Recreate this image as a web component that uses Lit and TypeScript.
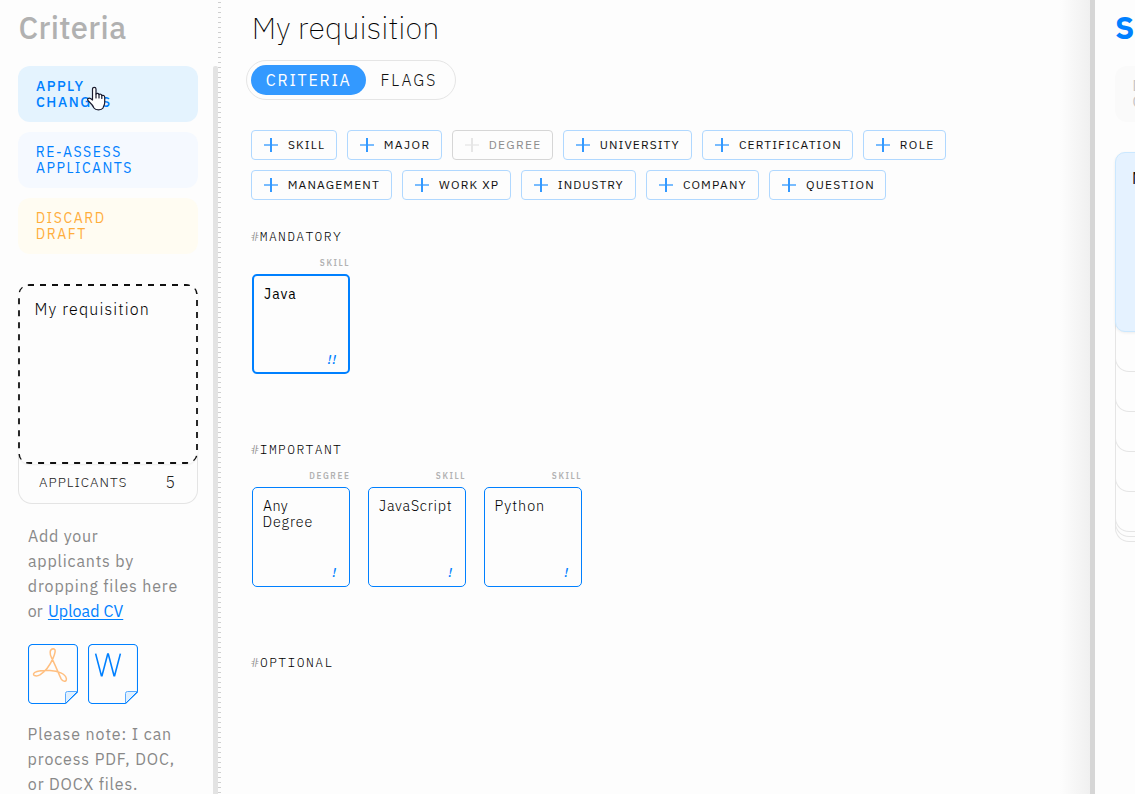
import { LitElement, html, css, svg, nothing } from "lit";
import { customElement, property } from "lit/decorators.js";

/** A line of text tracked out so that its glyphs span a given width. */
@customElement("tracked-text")
class TrackedText extends LitElement {
  @property() text = "";
  @property({ type: Number }) span = 0;

  static styles = css`
    :host { display: block; white-space: pre; }
  `;

  updated() {
    const cs = getComputedStyle(this);
    const ctx = document.createElement("canvas").getContext("2d")!;
    // Measured at twenty times the size, where the bounds are not rounded to whole pixels.
    const scale = 20;
    ctx.font = `${cs.fontStyle} ${cs.fontWeight} ${parseFloat(cs.fontSize) * scale}px ${cs.fontFamily}`;
    const m = ctx.measureText(this.text);
    const left = m.actualBoundingBoxLeft / scale;
    const ink = left + m.actualBoundingBoxRight / scale;
    const gaps = this.text.length - 1;
    const target = this.span - 0.6 + left * 0.5;
    if (gaps > 0) this.style.letterSpacing = `${((target - ink) / gaps).toFixed(3)}px`;
    this.style.textIndent = `${(left * 0.5 + 0.2).toFixed(2)}px`;
  }

  render() {
    return html`${this.text}`;
  }
}

const t = (text: string, span: number, cls = "") =>
  html`<tracked-text class=${cls || nothing} .text=${text} .span=${span}></tracked-text>`;

interface Chip { label: string; width: number; off?: boolean }

const chipRows: Chip[][] = [
  [
    { label: "SKILL", width: 86 },
    { label: "MAJOR", width: 95 },
    { label: "DEGREE", width: 101, off: true },
    { label: "UNIVERSITY", width: 129 },
    { label: "CERTIFICATION", width: 151 },
    { label: "ROLE", width: 83 },
  ],
  [
    { label: "MANAGEMENT", width: 141 },
    { label: "WORK XP", width: 109 },
    { label: "INDUSTRY", width: 115 },
    { label: "COMPANY", width: 113 },
    { label: "QUESTION", width: 117 },
  ],
];

interface Card { kind: string; kindSpan: number; lines: [string, number][]; mark: string; strong?: boolean }

const sections: { name: string; cards: Card[] }[] = [
  {
    name: "MANDATORY",
    cards: [{ kind: "SKILL", kindSpan: 29, lines: [["Java", 32]], mark: "!!", strong: true }],
  },
  {
    name: "IMPORTANT",
    cards: [
      { kind: "DEGREE", kindSpan: 39.5, lines: [["Any", 25], ["Degree", 49]], mark: "!" },
      { kind: "SKILL", kindSpan: 29, lines: [["JavaScript", 72.5]], mark: "!" },
      { kind: "SKILL", kindSpan: 29, lines: [["Python", 48.5]], mark: "!" },
    ],
  },
  { name: "OPTIONAL", cards: [] },
];

const sheet = (inner: unknown) => html`
  <svg class="sheet" width="50" height="60" viewBox="0 0 50 60" fill="none">
    <path d="M37.5 59.5H4.5a4 4 0 0 1-4-4v-51a4 4 0 0 1 4-4h41a4 4 0 0 1 4 4V48z" stroke="#0080ff" stroke-width="1.1" />
    <path d="M37.5 59.5V49.5a2 2 0 0 1 2-2h10z" fill="#e0f0ff" stroke="#5aabff" />
    <path d="M37.5 59.5L49.5 47.5" stroke="#0080ff" />
    ${inner}
  </svg>`;

const pdfMark = svg`<path d="M25.3 4.7c-4.2.3-3.6 5.5-1.7 9.2 3.3 6.3 5.6 12.500 9.500 21 2.300 3.800 6 2.700 5.200-.6-.9-4.500-8.300-7.300-16.300-7.800-8-.4-15.600.8-16.400 3.300-.5 2.400 3.400 2.800 6.700.8 6.200-4 9.800-9.800 12.600-16 1.800-4.200 3.800-9.500.4-9.900z" stroke="#ffbf80" stroke-width="1.500" />`;
const wordMark = svg`<path d="M7.600 9.600l5.800 22h.6L19.700 10h.6l5.700 21.600h.6L32.400 9.600" stroke="#0080ff" stroke-width="1.600" />`;

@customElement("app-root")
class AppRoot extends LitElement {
  static styles = css`
    :host {
      display: block;
      width: 1135px;
      height: 794px;
      overflow: hidden;
      position: relative;
      background: #fdfdfd;
      color: #111;
      font-family: "IBM Plex Sans", Roboto, "Liberation Sans", sans-serif;
    }
    * { box-sizing: border-box; }
    .page { display: grid; grid-template-columns: 213px 5px 33px 839px 5px 40px; height: 794px; }
    .side { padding-left: 18px; overflow: hidden; }
    .title { height: 66px; padding: 9px 0 0 1px; font-size: 31px; line-height: 37px; font-weight: 500; color: #b1b1b1; }
    .btn { width: 180px; height: 56px; border-radius: 12px; padding: 12px 18px; margin-bottom: 10px; font-size: 14px; line-height: 16px; }
    .apply { background: #e4f3fe; color: #0080ff; font-weight: 500; }
    .assess { background: #f5f9ff; color: #0080ff; }
    .discard { background: #fffcf2; color: #ffae3d; }
    .req { width: 180px; height: 220px; margin-top: 30px; border: 1px solid #e4e4e4; border-top: 0; border-radius: 14px; }
    .dash { display: block; width: 180px; height: 180px; margin-left: -1px; background: #fdfdfd; border-radius: 12px; box-shadow: 0 1px 2px #0001; }
    .reqbody { display: grid; }
    .reqbody > * { grid-area: 1 / 1; }
    .reqname { padding: 16px 0 0 16px; font-size: 16px; line-height: 19px; font-weight: 300; color: #000; }
    .reqfoot { display: flex; justify-content: space-between; padding: 8px 22px 0 20px; line-height: 20px; font-size: 13.500px; font-weight: 300; color: #222; }
    .five { font-size: 16px; }
    .note { padding-left: 10px; font-size: 16px; line-height: 25px; color: #888; }
    .first { margin-top: 20px; }
    .row { display: flex; }
    .link { margin-left: 5.500px; color: #0080ff; text-decoration: underline; text-underline-offset: 2px; }
    .sheets { display: flex; gap: 10px; padding: 20px 0 18px 10px; }
    .sheet { display: block; }
    .scroll { margin: 66px 0 3px; background: #e3e3e3; border-radius: 2px; }
    .ruler { width: 3px; background: repeating-linear-gradient(to bottom, transparent 0 2px, #cfcfcf 2px 3px, transparent 3px 5px); }
    .main { background: linear-gradient(to right, transparent 809px, #f0f0f0 839px); }
    .heading { height: 60px; padding: 10px 0 0 2px; font-size: 30.500px; line-height: 36px; font-weight: 200; color: #000; }
    .toggle { display: flex; width: 210px; height: 40px; margin-left: -5px; padding: 4px; border: 1px solid #e5e5e5; border-radius: 20px; font-size: 16px; line-height: 30px; }
    .on { width: 115px; border-radius: 15px; padding-left: 15px; background: #3399ff; color: #fff; }
    .off { padding-left: 15px; font-weight: 300; color: #111; }
    .chips { padding-top: 30px; display: flex; flex-direction: column; gap: 10px; }
    .chiprow { display: flex; gap: 10px; }
    .chip { display: flex; gap: 10px; height: 30px; padding-left: 12px; border: 1px solid #b0d8ff; border-radius: 4px; font-size: 12px; line-height: 28px; color: #111; }
    .plus { width: 14px; height: 14px; margin-top: 7px; color: #3399ff; }
    .dim { border-color: #d6d6d6; color: #8c8c8c; }
    .dim .plus { color: #e6e6e6; }
    .sections { padding-top: 29px; }
    .section { height: 213px; }
    .sname { display: flex; height: 16px; font-family: "IBM Plex Mono", "Liberation Mono", monospace; font-size: 13px; line-height: 16px; font-weight: 300; color: #000; }
    .sname .hash { color: #888; width: 9px; }
    .cards { display: flex; gap: 18px; padding: 12px 0 0 1px; }
    .cardcol { width: 98px; }
    .kind { display: flex; justify-content: flex-end; height: 17px; padding-top: 1px; font-size: 8.200px; line-height: 10px; font-weight: 600; color: #b2b2b2; }
    .kindbox { flex: none; }
    .card { display: flex; flex-direction: column; height: 100px; padding: 10px 12px 6px 10px; border: 1px solid #0080ff; border-radius: 5px; font-size: 14.400px; line-height: 16px; font-weight: 300; color: #000; }
    .strong { border-width: 2px; padding: 10px 10px 5px 10px; font-size: 14px; font-weight: 400; }
    .mark { margin: auto 1px 0 0; align-self: flex-end; font-size: 13px; line-height: 15px; font-style: italic; font-weight: 500; color: #0080ff; }
    .bar { background: #d6d6d6; }
    .right { padding-left: 20px; overflow: hidden; }
    .stitle { height: 66px; padding-top: 9px; font-size: 31px; line-height: 37px; font-weight: 700; color: #0080ff; white-space: nowrap; }
    .ghost { width: 180px; height: 56px; border-radius: 12px; padding: 12px 17.500px; background: #fafafa; color: #c4c4c4; font-size: 14px; line-height: 16px; }
    .deck { display: flex; flex-direction: column; width: 180px; padding-top: 30px; }
    .active { position: relative; z-index: 20; height: 180px; padding: 16px; border: 1px solid #cbe8ff; border-radius: 10px; background: #e5f2ff; font-size: 16px; line-height: 19px; box-shadow: 0 1px 3px #0001; }
    .under { height: 60px; margin-top: -20px; border: 1px solid #e5e5e5; border-top: 0; border-radius: 0 0 14px 14px; }
    .tight { margin-top: -55px; }
    .cursor { position: absolute; left: 87px; top: 86px; }
  `;

  private chip(c: Chip) {
    return html`<div class="chip ${c.off ? "dim" : ""}" style="width:${c.width}px">
      <svg class="plus" viewBox="0 0 14 14" fill="currentColor">
        <rect x="0" y="6" width="14" height="2" opacity=".65" />
        <rect x="6" y="0" width="2" height="14" />
      </svg>
      ${t(c.label, c.width - 50)}
    </div>`;
  }

  private card(c: Card) {
    return html`<div class="cardcol">
      <div class="kind"><div class="kindbox" style="width:${c.kindSpan + 1.2}px">${t(c.kind, c.kindSpan)}</div></div>
      <div class="card ${c.strong ? "strong" : ""}">
        ${c.lines.map(([s, w]) => t(s, w))}
        <div class="mark">${t(c.mark, c.strong ? 9 : 4)}</div>
      </div>
    </div>`;
  }

  render() {
    return html`
      <div class="page">
        <aside class="side">
          <div class="title">${t("Criteria", 107)}</div>
          <div class="btn apply">${t("APPLY", 47.5)}${t("CHANGES", 74)}</div>
          <div class="btn assess">${t("RE-ASSESS", 84)}${t("APPLICANTS", 95)}</div>
          <div class="btn discard">${t("DISCARD", 68)}${t("DRAFT", 49.5)}</div>
          <div class="req">
            <div class="reqbody">
              <svg class="dash" viewBox="0 0 180 180" fill="none">
                <rect x="1" y="1" width="178" height="178" rx="9" stroke="#111" stroke-width="1.8" stroke-dasharray="6 6" />
              </svg>
              <div class="reqname">${t("My requisition", 113)}</div>
            </div>
            <div class="reqfoot">${t("APPLICANTS", 87)}${t("5", 8, "five")}</div>
          </div>
          <div class="note first">
            ${t("Add your", 70)}${t("applicants by", 105.5)}${t("dropping files here", 149)}
            <div class="row">${t("or", 15)}${t("Upload CV", 75, "link")}</div>
          </div>
          <div class="sheets">${sheet(pdfMark)}${sheet(wordMark)}</div>
          <div class="note">${t("Please note: I can", 142.5)}${t("process PDF, DOC,", 145.5)}${t("or DOCX files.", 108.5)}</div>
        </aside>
        <div class="scroll"></div>
        <div class="ruler"></div>
        <main class="main">
          <div class="heading">${t("My requisition", 184)}</div>
          <div class="toggle"><div class="on">${t("CRITERIA", 84)}</div><div class="off">${t("FLAGS", 54)}</div></div>
          <div class="chips">${chipRows.map((r) => html`<div class="chiprow">${r.map((c) => this.chip(c))}</div>`)}</div>
          <div class="sections">
            ${sections.map((s) => html`<section class="section">
              <div class="sname"><span class="hash">#</span>${t(s.name, s.name.length * 9)}</div>
              <div class="cards">${s.cards.map((c) => this.card(c))}</div>
            </section>`)}
          </div>
        </main>
        <div class="bar"></div>
        <div class="right">
          <div class="stitle">S</div>
          <div class="ghost">D<br />C</div>
          <div class="deck">
            <div class="active">M</div>
            ${[0, 1, 2, 3, 4].map(() => html`<div class="under"></div>`)}
            <div class="under tight"></div>
            <div class="under tight"></div>
          </div>
        </div>
      </div>
      <svg class="cursor" width="20" height="26" viewBox="0 0 20 26">
        <path d="M5.500 14V3c0-2.300 3.500-2.300 3.500 0v5c1-1 2.600-.7 3 .6 1-.8 2.500-.4 2.800.9 1.300-.6 2.900.1 2.900 1.700v5.300c0 2.500-1.200 3.500-1.700 5.500-1.500 2.500-7.500 2.500-9 0C5.500 18.500 3.500 17 1.200 14.800c-1.500-1.800.6-3.500 2.300-2.300z" fill="#fff" stroke="#1a1a2e" stroke-width="1.200" stroke-linejoin="round" />
        <path d="M9 8v4M12 8.600V12M14.800 9.500V12.500" stroke="#1a1a2e" stroke-width="1.200" stroke-linecap="round" />
      </svg>
    `;
  }
}
